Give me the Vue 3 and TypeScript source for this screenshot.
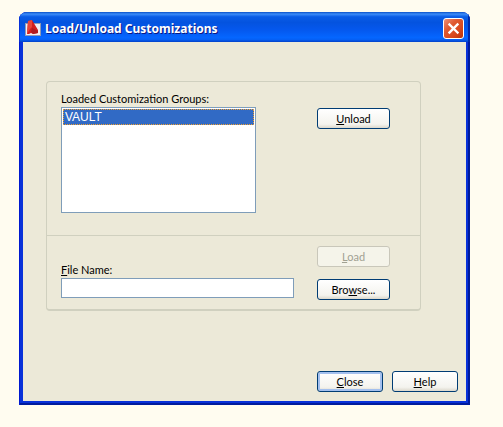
<script setup lang="ts">
import { ref } from 'vue'

const groups = ref<string[]>(['VAULT'])
const selected = ref<string>('VAULT')
const fileName = ref<string>('')

function unload(): void {
  groups.value = groups.value.filter((name) => name !== selected.value)
}
</script>

<template>
  <main class="window">
    <header class="titlebar">
      <svg class="logo" viewBox="0 0 16 16" aria-hidden="true">
        <rect x="0.5" y="3.5" width="15" height="12" fill="#f1f0f3" stroke="#8f9bb5" />
        <path d="M2 14 3 1 7 0 13 10v3l-5 1-2-1-2 1z" fill="#d3201f" />
        <path d="M3 1 7 0 7 7 5 9 2 14z" fill="#e8453a" />
        <path d="M7 8 13 11v2l-5 1-2-2z" fill="#b01c20" />
      </svg>
      <h1 class="title">Load/Unload Customizations</h1>
      <button class="dismiss" type="button" aria-label="Close window">
        <svg viewBox="0 0 19 19" aria-hidden="true">
          <path d="M5.5 5.5 13.5 13.5M13.5 5.5 5.5 13.5" stroke="#fff" stroke-width="2.4" stroke-linecap="square" />
        </svg>
      </button>
    </header>

    <form class="client" @submit.prevent>
      <div class="panel">
        <section class="section loaded">
          <div class="field">
            <label class="label" for="groups">Loaded Customization Groups:</label>
            <select id="groups" v-model="selected" class="list" size="6">
              <option v-for="name in groups" :key="name" :value="name" class="item">{{ name }}</option>
            </select>
          </div>
          <div class="buttons">
            <button class="btn" type="button" @click="unload"><u>U</u>nload</button>
          </div>
        </section>
        <section class="section file">
          <div class="field">
            <label class="label" for="file"><u>F</u>ile Name:</label>
            <input id="file" v-model="fileName" class="text" type="text" />
          </div>
          <div class="buttons">
            <button class="btn" type="button" disabled><u>L</u>oad</button>
            <button class="btn" type="button">Bro<u>w</u>se...</button>
          </div>
        </section>
      </div>
      <footer class="actions">
        <button class="btn default" type="button"><u>C</u>lose</button>
        <button class="btn" type="button"><u>H</u>elp</button>
      </footer>
    </form>
  </main>
</template>

<style>
body {
  background: #fffcf0;
}
</style>

<style scoped>
.window {
  margin: 12px 33px 22px 19px;
  border-radius: 8px 8px 0 0;
  overflow: hidden;
  background: #0831d9;
  box-shadow: inset 1px 0 #0019cf, inset -2px -2px #001b9c;
  padding: 0 4px 4px;
  font: 11px/13px Lato, "Liberation Sans", sans-serif;
  color: #000;
}

.titlebar {
  display: flex;
  align-items: center;
  height: 30px;
  margin: 0 -4px;
  padding: 0 6px;
  box-sizing: border-box;
  background: linear-gradient(#0a50c8 0, #3c8cf8 7%, #0a5ce6 16%, #0453df 35%, #0558ee 60%, #0566ff 85%, #0560f5 92%, #0340c8 100%);
  box-shadow: inset 1px 0 #0831d9, inset -2px 0 #0128a8;
}

.logo {
  width: 16px;
  height: 16px;
  margin-top: 2px;
}

.title {
  flex: 1;
  margin: 0 4px;
  padding-top: 4px;
  font: bold 12px/16px "Noto Sans", Tahoma, sans-serif;
  color: #fff;
  text-shadow: 1px 1px #0a1883;
  white-space: nowrap;
}

.dismiss {
  width: 21px;
  height: 21px;
  margin-top: 3px;
  padding: 0;
  box-sizing: border-box;
  border: 1px solid #fff;
  border-radius: 3px;
  background: linear-gradient(135deg, #ee9078, #e05a32 35%, #d8471c 70%, #b83208);
}

.dismiss svg {
  display: block;
  width: 100%;
  height: 100%;
}

.client {
  display: block;
  background: #ece9d8;
  padding: 39px 8px 9px 23px;
}

.panel {
  margin-right: 37px;
  border: 1px solid #d0d0bf;
  border-bottom-width: 2px;
  border-radius: 4px;
}

.section {
  display: grid;
  grid-template-columns: 1fr 73px;
  column-gap: 23px;
  padding: 10px 30px 9px 14px;
}

.loaded {
  padding-bottom: 22px;
}

.file {
  border-top: 1px solid #d0d0bf;
}

.loaded .buttons {
  padding-top: 16px;
}

.file .field {
  padding-top: 17px;
}

.buttons {
  display: flex;
  flex-direction: column;
  gap: 12px;
}

.label {
  display: block;
  margin-bottom: 2px;
}

.list {
  display: block;
  width: calc(100% - 38px);
  height: 106px;
  box-sizing: border-box;
  padding: 1px;
  border: 1px solid #7f9db9;
  border-radius: 0;
  outline: 0;
  background: #fff;
  font: 12px "Liberation Sans", Arial, sans-serif;
  overflow: hidden;
}

.item {
  min-height: 0;
  padding: 0 1px;
  line-height: 12px;
  border: 1px dotted #f0a030;
}

.item:checked {
  background: #316ac5 linear-gradient(#316ac5, #316ac5);
  color: #fff;
  -webkit-text-fill-color: #fff;
}

.text {
  display: block;
  width: 100%;
  height: 20px;
  box-sizing: border-box;
  padding: 2px 3px;
  border: 1px solid #7f9db9;
  background: #fff;
  font: inherit;
}

.btn {
  height: 21px;
  padding: 0;
  box-sizing: border-box;
  border: 1px solid #003c74;
  border-radius: 3px;
  background: linear-gradient(#fff, #f4f3ee 80%, #dcd8cc);
  font: inherit;
  color: #000;
}

.btn:disabled {
  border-color: #c9c7ba;
  background: #f5f4ea;
  color: #a1a192;
}

.btn.default {
  box-shadow: inset 0 0 0 2px #a4c0ee;
}

.actions {
  display: flex;
  justify-content: flex-end;
  gap: 9px;
  margin-top: 60px;
}

.actions .btn {
  width: 66px;
}
</style>
